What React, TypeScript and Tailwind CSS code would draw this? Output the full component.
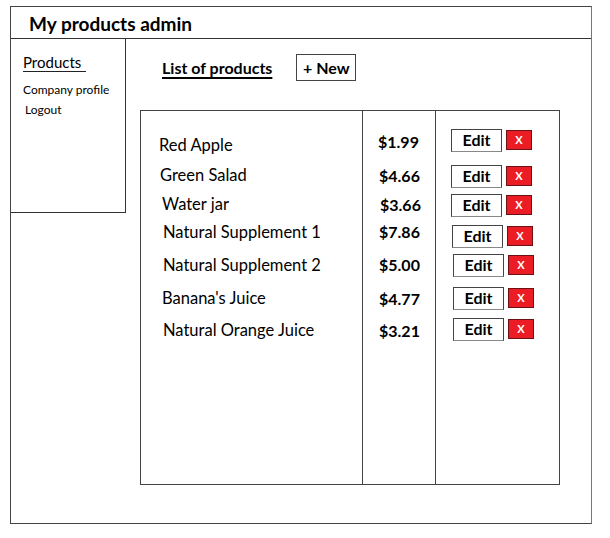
const products = [
  { name: "Red Apple", price: "$1.99", nameCls: "mt-[24px] ml-[18px]", priceCls: "mt-[21px] ml-[15px]", rowCls: "mt-[18px] ml-[15px]" },
  { name: "Green Salad", price: "$4.66", nameCls: "mt-[10px] ml-[19px]", priceCls: "mt-[14px] ml-[16px]", rowCls: "mt-[13px] ml-[15px]" },
  { name: "Water jar", price: "$3.66", nameCls: "mt-[9px] ml-[21px]", priceCls: "mt-[9px] ml-[17px]", rowCls: "mt-[6px] ml-[15px]" },
  { name: "Natural Supplement 1", price: "$7.86", nameCls: "mt-[8px] ml-[22px]", priceCls: "mt-[7px] ml-[16px]", rowCls: "mt-[8px] ml-[16px]" },
  { name: "Natural Supplement 2", price: "$5.00", nameCls: "mt-[13px] ml-[22px]", priceCls: "mt-[13px] ml-[16px]", rowCls: "mt-[6px] ml-[17px]" },
  { name: "Banana's Juice", price: "$4.77", nameCls: "mt-[13px] ml-[21px]", priceCls: "mt-[14px] ml-[16px]", rowCls: "mt-[10px] ml-[17px]" },
  { name: "Natural Orange Juice", price: "$3.21", nameCls: "mt-[12px] ml-[22px]", priceCls: "mt-[12px] ml-[16px]", rowCls: "mt-[8px] ml-[17px]" },
];

export default function App() {
  return (
    <div className="w-[610px] h-[538px] bg-white pt-[6px] pl-[10px] text-black font-['Lato','Liberation_Sans',sans-serif]">
      <div className="w-[582px] h-[518px] border border-[#444] border-r-[#777] flex flex-col">
        {/* Header */}
        <div className="h-[32px] shrink-0 border-b border-[#333] pl-[18px] flex items-center">
          <h1 className="text-[19px] leading-[24px] font-bold mt-[2px]">My products admin</h1>
        </div>

        <div className="flex flex-1">
          {/* Sidebar */}
          <div className="w-[115px] h-[174px] shrink-0 border-r border-b border-[#333] pl-[12px] pt-[14px]">
            <div className="text-[15px] leading-[18px] w-[63px] border-b border-[#222]">Products</div>
            <div className="mt-[10px] text-[12px] leading-[15px]">Company profile</div>
            <div className="mt-[5px] ml-[2px] text-[12px] leading-[15px]">Logout</div>
          </div>

          {/* Main */}
          <div className="flex-1 pl-[14px] pt-[15px]">
            <div className="flex items-center ml-[22px] h-[27px]">
              <h2 className="text-[16px] leading-[20px] font-bold underline underline-offset-[3px] decoration-[2px]">List of products</h2>
              <button className="ml-[24px] h-[27px] w-[60px] border border-[#444] text-[16px] font-bold leading-none">+ New</button>
            </div>

            {/* Table */}
            <div className="mt-[29px] w-[420px] h-[375px] border border-[#444] flex">
              <div className="w-[222px] border-r border-[#444] flex flex-col">
                {products.map((p) => (
                  <div key={p.name} className={`text-[16.5px] leading-[20px] ${p.nameCls}`}>{p.name}</div>
                ))}
              </div>
              <div className="w-[73px] border-r border-[#444] flex flex-col">
                {products.map((p) => (
                  <div key={p.name} className={`text-[16px] leading-[20px] font-bold ${p.priceCls}`}>{p.price}</div>
                ))}
              </div>
              <div className="flex-1 flex flex-col">
                {products.map((p) => (
                  <div key={p.name} className={`flex items-start gap-[4px] ${p.rowCls}`}>
                    <button className="w-[51px] h-[23px] border border-[#444] border-b-[#888] text-[16px] font-bold leading-none pb-[2px]">Edit</button>
                    <span className="mt-[1px] w-[26px] h-[20px] bg-[#ec1c24] border border-[#6b1014] text-white text-[11px] font-bold flex items-center justify-center">X</span>
                  </div>
                ))}
              </div>
            </div>
          </div>
        </div>
      </div>
    </div>
  );
}
